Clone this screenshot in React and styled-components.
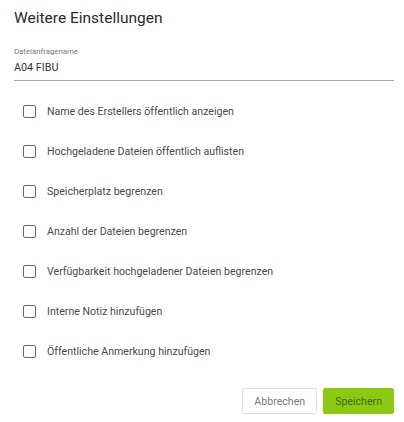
import React from "react";
import styled, { createGlobalStyle } from "styled-components";

const Global = createGlobalStyle`
  html, body { margin: 0; padding: 0; background: #fff; }
  body { font-family: Roboto, "Noto Sans", Arial, sans-serif; }
  * { box-sizing: border-box; }
`;

const Dialog = styled.div`
  width: 404px;
  height: 422px;
  padding: 8px 10px 0 14px;
  display: flex;
  flex-direction: column;
`;

const Title = styled.h2`
  margin: 0;
  font-size: 15.5px;
  line-height: 20px;
  font-weight: 400;
  color: #2b2b2b;
`;

const Field = styled.div`
  margin-top: 19px;
  display: flex;
  flex-direction: column;
  border-bottom: 1px solid #a8a8a8;
  padding-bottom: 5px;
`;

const FieldLabel = styled.label`
  font-size: 7.8px;
  line-height: 10px;
  color: #7a7a7a;
`;

const FieldValue = styled.div`
  margin-top: 4px;
  font-size: 10.8px;
  line-height: 14px;
  color: #333;
`;

const List = styled.div`
  margin-top: 10px;
  display: flex;
  flex-direction: column;
`;

const Row = styled.label`
  height: 40px;
  display: flex;
  align-items: center;
  gap: 11px;
  padding-left: 9px;
  font-size: 10.6px;
  color: #4a4a4a;
  cursor: pointer;
`;

const Box = styled.span`
  width: 13px;
  height: 13px;
  border: 1.5px solid #6b6b6b;
  border-radius: 2px;
  flex: none;
`;

const Actions = styled.div`
  margin-top: 17px;
  display: flex;
  justify-content: flex-end;
  gap: 6px;
`;

const Button = styled.button`
  height: 26px;
  padding: 0 ${(p) => (p.$primary ? "11px" : "11px")};
  border-radius: 2px;
  font-family: inherit;
  font-size: 10.6px;
  border: 1px solid ${(p) => (p.$primary ? "#8cc914" : "#e2e2e2")};
  background: ${(p) => (p.$primary ? "#8cc914" : "#fff")};
  color: ${(p) => (p.$primary ? "#3f6e08" : "#7a7a7a")};
  cursor: pointer;
`;

const options = [
  "Name des Erstellers öffentlich anzeigen",
  "Hochgeladene Dateien öffentlich auflisten",
  "Speicherplatz begrenzen",
  "Anzahl der Dateien begrenzen",
  "Verfügbarkeit hochgeladener Dateien begrenzen",
  "Interne Notiz hinzufügen",
  "Öffentliche Anmerkung hinzufügen",
];

export default function App() {
  return (
    <>
      <Global />
      <Dialog>
        <Title>Weitere Einstellungen</Title>
        <Field>
          <FieldLabel>Dateianfragename</FieldLabel>
          <FieldValue>A04 FIBU</FieldValue>
        </Field>
        <List>
          {options.map((o) => (
            <Row key={o}>
              <Box />
              {o}
            </Row>
          ))}
        </List>
        <Actions>
          <Button>Abbrechen</Button>
          <Button $primary>Speichern</Button>
        </Actions>
      </Dialog>
    </>
  );
}
